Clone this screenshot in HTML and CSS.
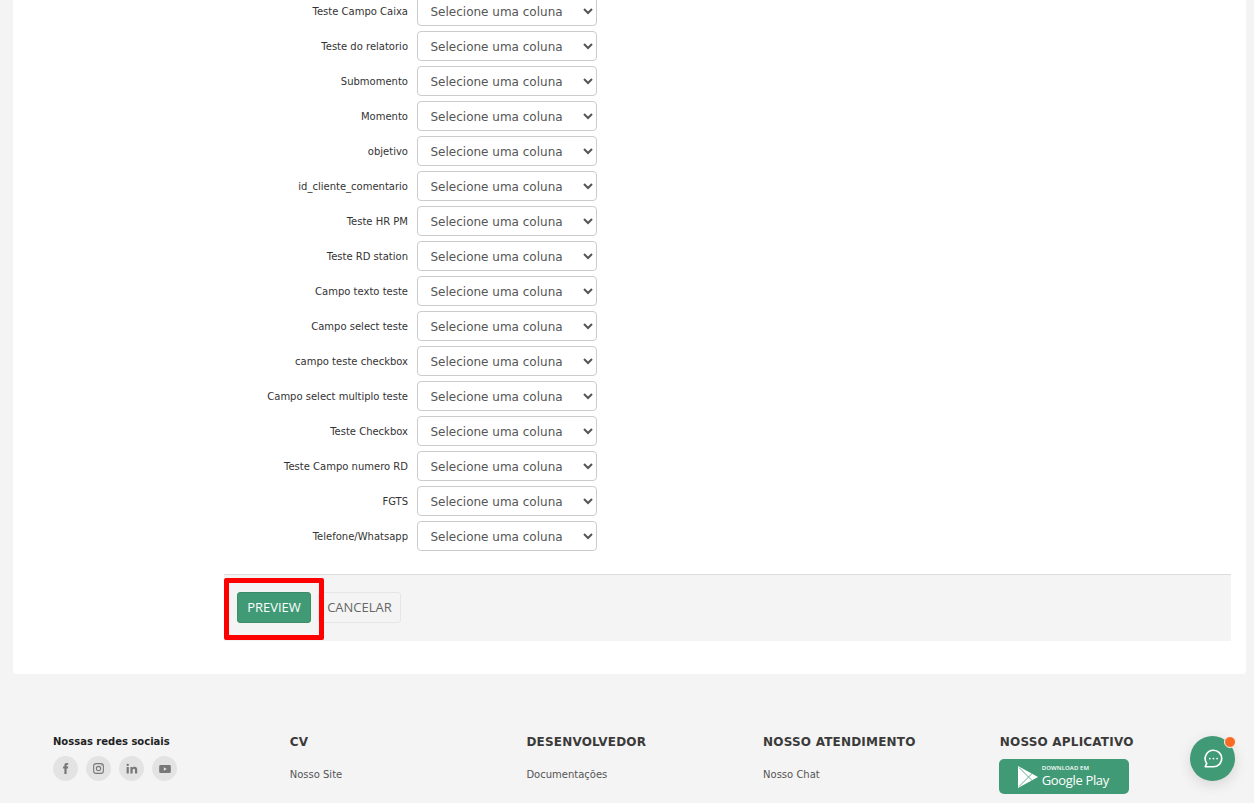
FILE: index.html
```html
<!DOCTYPE html>
<html lang="pt-BR">
<head>
<meta charset="utf-8">
<title>Importar</title>
<link rel="stylesheet" href="styles.css">
</head>
<body>
<div class="page">
  <main class="card">
    <form class="form">
      <div class="row"><label>Teste Campo Caixa</label><select><option>Selecione uma coluna</option></select></div>
      <div class="row"><label>Teste do relatorio</label><select><option>Selecione uma coluna</option></select></div>
      <div class="row"><label>Submomento</label><select><option>Selecione uma coluna</option></select></div>
      <div class="row"><label>Momento</label><select><option>Selecione uma coluna</option></select></div>
      <div class="row"><label>objetivo</label><select><option>Selecione uma coluna</option></select></div>
      <div class="row"><label>id_cliente_comentario</label><select><option>Selecione uma coluna</option></select></div>
      <div class="row"><label>Teste HR PM</label><select><option>Selecione uma coluna</option></select></div>
      <div class="row"><label>Teste RD station</label><select><option>Selecione uma coluna</option></select></div>
      <div class="row"><label>Campo texto teste</label><select><option>Selecione uma coluna</option></select></div>
      <div class="row"><label>Campo select teste</label><select><option>Selecione uma coluna</option></select></div>
      <div class="row"><label>campo teste checkbox</label><select><option>Selecione uma coluna</option></select></div>
      <div class="row"><label>Campo select multiplo teste</label><select><option>Selecione uma coluna</option></select></div>
      <div class="row"><label>Teste Checkbox</label><select><option>Selecione uma coluna</option></select></div>
      <div class="row"><label>Teste Campo numero RD</label><select><option>Selecione uma coluna</option></select></div>
      <div class="row"><label>FGTS</label><select><option>Selecione uma coluna</option></select></div>
      <div class="row"><label>Telefone/Whatsapp</label><select><option>Selecione uma coluna</option></select></div>
      <div class="actions">
        <span class="highlight"></span>
        <button type="button" class="btn btn-primary">PREVIEW</button>
        <button type="button" class="btn btn-default">CANCELAR</button>
      </div>
    </form>
  </main>
  <footer class="footer">
    <div class="col">
      <div class="social-title">Nossas redes sociais</div>
      <div class="social">
        <a class="soc"><svg viewBox="0 0 24 24" width="13" height="13"><path fill="#777" d="M14 8.500V6.400c0-.9.4-1.300 1.400-1.300H17V2h-2.700C11.400 2 10 3.700 10 6v2.500H7.500V12H10v10h4V12h2.600l.4-3.500z"/></svg></a>
        <a class="soc"><svg viewBox="0 0 24 24" width="13" height="13" fill="none" stroke="#777" stroke-width="2"><rect x="3" y="3" width="18" height="18" rx="5"/><circle cx="12" cy="12" r="4"/><circle cx="17" cy="7" r=".8" fill="#777" stroke="none"/></svg></a>
        <a class="soc"><svg viewBox="0 0 24 24" width="13" height="13"><path fill="#777" d="M3 9h4v12H3zM5 3a2.200 2.200 0 1 1 0 4.400A2.200 2.200 0 0 1 5 3zM10 9h3.800v1.700c.6-1 1.900-2 3.900-2 4 0 4.800 2.500 4.800 6V21h-4v-5.500c0-1.500 0-3.200-2-3.200s-2.400 1.500-2.400 3.100V21H10z"/></svg></a>
        <a class="soc"><svg viewBox="0 0 24 24" width="14" height="14"><path fill="#777" fill-rule="evenodd" d="M4.500 5h15A2.500 2.500 0 0 1 22 7.500v9a2.500 2.500 0 0 1-2.500 2.500h-15A2.500 2.500 0 0 1 2 16.500v-9A2.500 2.500 0 0 1 4.500 5zM10 9v6l5-3z"/></svg></a>
      </div>
    </div>
    <div class="col">
      <h4>CV</h4>
      <a class="link">Nosso Site</a>
    </div>
    <div class="col">
      <h4>DESENVOLVEDOR</h4>
      <a class="link">Documentações</a>
    </div>
    <div class="col">
      <h4>NOSSO ATENDIMENTO</h4>
      <a class="link">Nosso Chat</a>
    </div>
    <div class="col">
      <h4>NOSSO APLICATIVO</h4>
      <a class="play">
        <svg viewBox="0 0 20 22" width="20" height="22"><path fill="#fff" d="M0 0l20 11L0 22z"/><path fill="none" stroke="#419a76" stroke-width=".8" d="M1 1.500L10.500 11 1 20.500M10.500 11l3.500-3.400M10.500 11l3.500 3.400"/></svg>
        <span class="play-text"><small>DOWNLOAD EM</small><b>Google Play</b></span>
      </a>
    </div>
  </footer>
</div>
<button type="button" class="chat" aria-label="Chat">
  <svg viewBox="0 0 24 24" width="22" height="22" fill="none" stroke="#fff" stroke-width="1.800"><path d="M12.500 2.500a9 9 0 0 1 0 18H3.500l1.700-3.700A9 9 0 0 1 12.500 2.500z" stroke-linejoin="round"/><circle cx="8.500" cy="11.500" r="1" fill="#fff" stroke="none"/><circle cx="12.500" cy="11.500" r="1" fill="#fff" stroke="none"/><circle cx="16.500" cy="11.500" r="1" fill="#fff" stroke="none"/></svg>
  <span class="dot"></span>
</button>
</body>
</html>
```
FILE: styles.css
```css
* { box-sizing: border-box; }
html, body { margin: 0; height: 803px; overflow: hidden; background: #f4f4f4; }
body { font-family: "DejaVu Sans", Verdana, sans-serif; color: #333; position: relative; }
.page { margin-top: -4px; padding: 0 8px 0 13px; }
.card { background: #fff; width: 1233px; height: 678px; padding: 0 15px 33px 211px; border-radius: 0 0 4px 4px; }
.form { display: flex; flex-direction: column; }
.row { display: flex; align-items: center; height: 35px; padding-bottom: 5px; gap: 9px; }
.row label { width: 184px; text-align: right; font-size: 10px; color: #333; }
.row select { width: 180px; height: 30px; background: #fff; border: 1px solid #ccc; border-radius: 4px; padding: 2px 8px 0 8.500px; font: 12px "DejaVu Sans", Verdana, sans-serif; color: #555; }
.actions { position: relative; margin-top: 18px; height: 67px; background: #f4f4f4; border-top: 1px solid #ddd; padding: 17px 13px; display: flex; gap: 11px; align-items: flex-start; }
.highlight { position: absolute; left: 0; top: 3px; width: 100px; height: 62px; border: 5px solid #f00; border-radius: 2px; }
.btn { height: 31px; border-radius: 3px; font: 13px "Open Sans", sans-serif; padding: 0 0 2px; }
.btn-primary { width: 74px; background: #419a76; border: 1px solid #3a8c6b; color: #fff; font-weight: 500; }
.btn-default { width: 83px; background: #f4f4f4; border: 1px solid #e6e6e6; color: #666; margin-left: -4px; }
.footer { display: flex; padding: 56px 0 0 40px; height: 129px; }
.col { width: 236.700px; }
.social-title { font-size: 10px; line-height: 12px; font-weight: 700; color: #222; margin-top: 6px; }
.social { display: flex; gap: 8px; margin-top: 8px; }
.soc { width: 25px; height: 25px; border-radius: 50%; background: #e3e3e3; display: flex; align-items: center; justify-content: center; }
.col h4 { margin: 0; font-size: 12px; line-height: 14px; font-weight: 700; color: #3a3a3a; padding-top: 5px; letter-spacing: .2px; }
.link { display: block; font-size: 10px; color: #555; margin-top: 20px; }
.play { display: flex; align-items: center; gap: 4px; width: 130px; height: 35px; background: #419a76; border-radius: 5px; margin-top: 10px; padding-left: 19px; color: #fff; margin-left: -1px; }
.play-text { display: flex; flex-direction: column; gap: 1px; margin-top: -1px; font-family: "Open Sans", sans-serif; }
.play-text small { font-size: 6px; line-height: 7px; font-weight: 600; letter-spacing: .1px; }
.play-text b { font-size: 13px; line-height: 15px; font-weight: 400; letter-spacing: -.35px; }
.chat { position: absolute; left: 1190px; top: 736px; width: 45px; height: 45px; border: 0; border-radius: 50%; background: #419a76; padding: 0; display: flex; align-items: center; justify-content: center; box-shadow: 0 4px 14px rgba(0,0,0,.12); }
.dot { position: absolute; right: -1px; top: 0; width: 12px; height: 12px; border-radius: 50%; background: #f96a24; border: 1px solid #f4f4f4; }
```
